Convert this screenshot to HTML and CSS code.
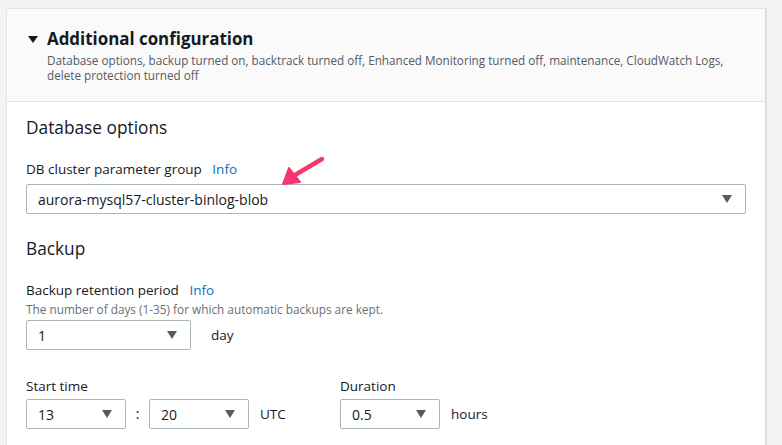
FILE: index.html
```html
<!DOCTYPE html>
<html>
<head>
<meta charset="utf-8">
<link rel="stylesheet" href="styles.css">
</head>
<body>
<div class="page">
  <section class="card">
    <header class="card-head">
      <div class="title-row">
        <span class="caret"></span>
        <h2 class="title">Additional configuration</h2>
      </div>
      <p class="summary">Database options, backup turned on, backtrack turned off, Enhanced Monitoring turned off, maintenance, CloudWatch Logs, delete protection turned off</p>
    </header>
    <div class="card-body">
      <h3 class="section-title">Database options</h3>
      <div class="field">
        <div class="label">DB cluster parameter group <a class="info">Info</a></div>
        <div class="select wide"><span>aurora-mysql57-cluster-binlog-blob</span><span class="tri"></span></div>
        <svg class="arrow" width="46" height="34" viewBox="0 0 46 34">
          <path d="M42 4 L15 20" stroke="#f7356f" stroke-width="4.5" stroke-linecap="round" fill="none"/>
          <polygon points="3,29 9,13 20,27" fill="#f7356f" stroke="#f7356f" stroke-width="2" stroke-linejoin="round"/>
        </svg>
      </div>

      <h3 class="section-title backup">Backup</h3>
      <div class="field">
        <div class="label">Backup retention period <a class="info">Info</a></div>
        <div class="hint">The number of days (1-35) for which automatic backups are kept.</div>
        <div class="inline">
          <div class="select w164"><span>1</span><span class="tri"></span></div>
          <span class="unit day">day</span>
        </div>
      </div>

      <div class="time-row">
        <div class="field">
          <div class="label">Start time</div>
          <div class="inline">
            <div class="select w99"><span>13</span><span class="tri"></span></div>
            <span class="colon">:</span>
            <div class="select w99"><span>20</span><span class="tri"></span></div>
            <span class="unit">UTC</span>
          </div>
        </div>
        <div class="field">
          <div class="label">Duration</div>
          <div class="inline">
            <div class="select w99"><span>0.5</span><span class="tri"></span></div>
            <span class="unit">hours</span>
          </div>
        </div>
      </div>
    </div>
  </section>
</div>
</body>
</html>
```

FILE: styles.css
```css
* { box-sizing: border-box; }
html, body { margin: 0; padding: 0; }
body {
  background: #f2f3f3;
  font-family: "Open Sans", "Noto Sans", Arial, sans-serif;
  color: #16191f;
  width: 782px;
  height: 445px;
  overflow: hidden;
}
.page { padding: 8px 16px 0 6px; }
.card {
  background: #fff;
  border: 1px solid #e4e6e6;
  border-right: 1px solid #d5dbdb;
  box-shadow: 1px 0 0 #e0e3e3;
  height: 437px;
  border-bottom: 0;
}
.card-head {
  background: #fafafa;
  border-bottom: 1px solid #e4e6e6;
  padding: 18px 20px 0 21px;
  height: 93px;
}
.title-row { display: flex; align-items: center; }
.caret {
  width: 0; height: 0;
  border-left: 5px solid transparent;
  border-right: 5px solid transparent;
  border-top: 7px solid #16191f;
  margin-right: 9px;
  margin-top: 1px;
}
.title {
  margin: 0;
  font-size: 16.9px;
  font-weight: 700;
  line-height: 24px;
}
.summary {
  margin: 2px 0 0 19px;
  font-size: 11.7px;
  line-height: 15px;
  color: #545b64;
}
.card-body { padding: 0 19px 0 19px; position: relative; }
.section-title {
  margin: 14px 0 0 0;
  font-size: 17.3px;
  font-weight: 400;
  line-height: 24px;
}
.section-title.backup { margin-top: 23px; }
.field { position: relative; }
.label {
  margin-top: 20px;
  font-size: 13.5px;
  line-height: 18px;
}
.info {
  color: #0073bb;
  margin-left: 7px;
  font-weight: 400;
}
.hint {
  font-size: 11.8px;
  line-height: 15px;
  color: #687078;
  margin-top: 3px;
}
.select {
  display: flex;
  align-items: center;
  justify-content: space-between;
  height: 30px;
  border: 1px solid #aab7b8;
  border-radius: 2px;
  background: #fff;
  padding: 0 13px 0 11px;
  font-size: 14px;
}
.select.wide { width: 720px; margin-top: 6px; }
.w164 { width: 165px; }
.w99 { width: 100px; }
.tri {
  width: 0; height: 0;
  border-left: 5px solid transparent;
  border-right: 5px solid transparent;
  border-top: 8px solid #545b64;
}
.inline { display: flex; align-items: flex-end; }
.inline .select { margin-top: 4px; }
.hint + .inline .select { margin-top: 3px; }
.unit { font-size: 13.5px; line-height: 30px; margin-left: 11px; }
.unit.day { margin-left: 20px; }
.colon { font-size: 14px; line-height: 30px; width: 23px; text-align: center; }
.time-row { display: flex; margin-top: 17px; }
.time-row .field:first-child { width: 314px; }
.time-row .label { margin-top: 10px; }
.arrow { position: absolute; left: 254px; top: -5px; }
```
